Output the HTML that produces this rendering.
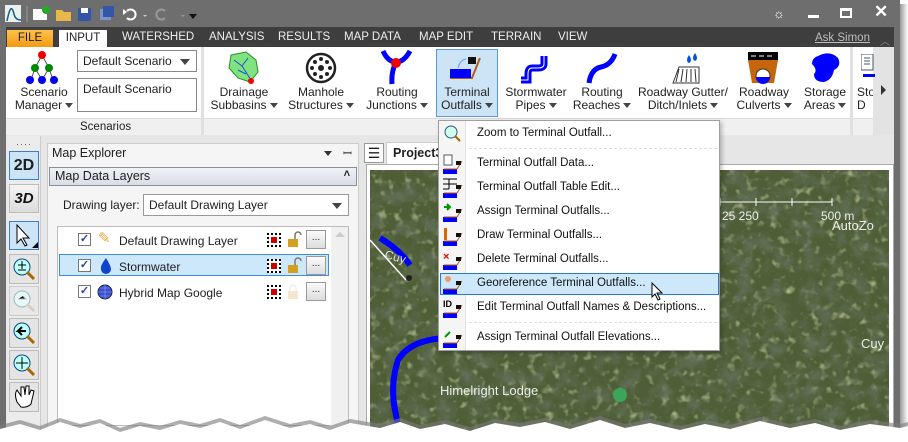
<!DOCTYPE html>
<html><head><meta charset="utf-8"><style>
*{box-sizing:border-box;margin:0;padding:0}
body{width:908px;height:442px;overflow:hidden;background:#fff;font-family:"Liberation Sans",sans-serif;font-size:12px;color:#1e1e1e;position:relative}
.a{position:absolute}
.tab{position:absolute;top:31px;color:#eee;font-size:11.5px}
.rb{position:absolute;top:86px;text-align:center;font-size:12px;line-height:13px;color:#222;white-space:nowrap}
.tri{display:inline-block;width:0;height:0;border-left:4px solid transparent;border-right:4px solid transparent;border-top:5px solid #444;vertical-align:middle;margin-left:3px}
.tb{position:absolute;left:9px;width:30px;height:29px;background:linear-gradient(#f4f4f4,#dcdcdc);border:1px solid #bcbcbc}
.mi{position:absolute;left:477px;font-size:11.5px;color:#111}
.row{position:absolute;left:59px;width:270px;height:22px}
.cb{position:absolute;left:78px;width:13px;height:13px;border:1px solid #777;background:#fff;font-size:11px;line-height:10px;text-align:center;color:#2c3fa8;font-weight:bold}
.dots{position:absolute;left:267px;width:14px;height:14px;border:2px dotted #000;background:#fff}
.dots:after{content:"";position:absolute;left:2px;top:2px;width:6px;height:6px;background:#c00}
.btn{position:absolute;left:306px;width:20px;height:19px;border:1px solid #999;background:linear-gradient(#fafafa,#ddd);font-size:10px;text-align:center;line-height:14px}
</style></head><body>
<div class="a" style="left:0;top:0;width:900px;height:442px;background:#6e6e6e"></div>
<div class="a" style="left:900px;top:4px;width:8px;height:438px;background:linear-gradient(90deg,#9a9a9a,#fff)"></div>
<svg class="a" style="left:5px;top:4px" width="200" height="20">
<rect x="0" y="1" width="16" height="17" fill="#e8f0f0"/><path d="M2 17 C5 2 7 2 9 10 C10 15 13 16 16 16" stroke="#1a5d88" stroke-width="1.5" fill="none"/>
<line x1="22" y1="2" x2="22" y2="18" stroke="#999"/>
<rect x="28" y="5" width="14" height="11" fill="#fff"/><circle cx="41" cy="6" r="4" fill="#2a2"/>
<path d="M51 6h6l2 2h7v9h-15z" fill="#e8b94a"/>
<rect x="73" y="4" width="13" height="13" fill="#3456a8"/><rect x="76" y="4" width="7" height="5" fill="#fff"/>
<rect x="95" y="5" width="11" height="11" fill="#7a93c8"/><rect x="98" y="2" width="11" height="11" fill="#3456a8"/>
<path d="M122 7 a5 5 0 1 1 0 7" stroke="#fff" stroke-width="2" fill="none"/><path d="M118 5l4 3-4 3z" fill="#fff"/>
<path d="M138 11l2 2 2-2z" fill="#ccc"/>
<path d="M160 7 a5 5 0 1 0 0 7" stroke="#999" stroke-width="2" fill="none"/>
<path d="M176 11l2 2 2-2z" fill="#999"/><path d="M184 10h8l-4 5z" fill="#111"/>
</svg>
<div class="a" style="left:773px;top:6px;color:#fff;font-size:13px">☼</div>
<div class="a" style="left:808px;top:15px;width:11px;height:3px;background:#fff"></div>
<div class="a" style="left:840px;top:8px;width:12px;height:10px;border:2px solid #fff;border-top-width:3px"></div>
<div class="a" style="left:874px;top:2px;color:#fff;font-size:17px;font-weight:bold">✕</div>
<div class="a" style="left:6px;top:27px;width:888px;height:20px;background:#3e3e3e"></div>
<div class="a" style="left:7px;top:30px;width:46px;height:17px;background:linear-gradient(#ffc24a,#f39a12);text-align:center;font-size:11.5px;line-height:17px">FILE</div>
<div class="a" style="left:59px;top:30px;width:48px;height:17px;background:#fff;text-align:center;font-size:11.5px;line-height:17px">INPUT</div>
<div class="tab" style="left:122px">WATERSHED</div><div class="tab" style="left:209px">ANALYSIS</div><div class="tab" style="left:278px">RESULTS</div><div class="tab" style="left:344px">MAP DATA</div><div class="tab" style="left:419px">MAP EDIT</div><div class="tab" style="left:491px">TERRAIN</div><div class="tab" style="left:558px">VIEW</div>
<div class="tab" style="left:815px;top:32px;color:#bbb;text-decoration:underline">Ask Simon</div>
<div class="a" style="left:880px;top:33px;color:#888;font-size:10px">︿</div>
<div class="a" style="left:6px;top:47px;width:888px;height:72px;background:#fff"></div>
<div class="a" style="left:6px;top:118px;width:888px;height:17px;background:#f0f0f0;border-top:1px solid #ddd"></div>
<div class="a" style="left:201px;top:47px;width:3px;height:88px;background:#e0e0e0"></div>
<div class="a" style="left:850px;top:47px;width:3px;height:88px;background:#e0e0e0"></div>
<div class="a" style="left:873px;top:47px;width:21px;height:88px;background:#e3e3e3"></div>
<div class="a" style="left:881px;top:85px;border-top:5px solid transparent;border-bottom:5px solid transparent;border-left:5px solid #333"></div>
<div class="a" style="left:80px;top:121px;font-size:11.5px">Scenarios</div>
<svg class="a" style="left:25px;top:50px" width="36" height="34"><path d="M17 5L10 18M17 5L24 18M10 18L6 30M10 18L17 30M24 18L28 30M24 18L17 30" stroke="#333" stroke-width="0.8"/><circle cx="17" cy="5" r="4" fill="#e00"/><circle cx="10" cy="18" r="4" fill="#080"/><circle cx="24" cy="18" r="4" fill="#080"/><circle cx="5" cy="30" r="4" fill="#00e"/><circle cx="17" cy="30" r="4" fill="#00e"/><circle cx="29" cy="30" r="4" fill="#00e"/></svg>
<div class="rb" style="left:14px;width:60px;top:86px">Scenario<br>Manager<span class="tri"></span></div>
<div class="a" style="left:77px;top:50px;width:120px;height:22px;border:1px solid #888;padding:3px 5px">Default Scenario<span class="a" style="right:6px;top:8px;border-left:5px solid transparent;border-right:5px solid transparent;border-top:6px solid #444"></span></div>
<div class="a" style="left:77px;top:78px;width:120px;height:34px;border:1px solid #888;padding:3px 5px">Default Scenario</div>
<svg class="a" style="left:226px;top:50px" width="36" height="35"><path d="M5 5 L20 2 L30 10 L32 22 L24 32 L12 28 L3 18Z" fill="#7fe47f" stroke="#2a8a2a"/><path d="M8 10 L16 16 L25 30 M16 16 L22 8 M12 20L20 24" stroke="#2050d0" fill="none"/><circle cx="25" cy="31" r="3" fill="#e00"/></svg>
<svg class="a" style="left:304px;top:52px" width="34" height="34"><circle cx="17" cy="16" r="14" fill="#fff" stroke="#222" stroke-width="2.5"/><circle cx="17" cy="16" r="3" fill="#222"/><g fill="#222"><circle cx="17" cy="7" r="2"/><circle cx="17" cy="25" r="2"/><circle cx="8" cy="16" r="2"/><circle cx="26" cy="16" r="2"/><circle cx="11" cy="10" r="2"/><circle cx="23" cy="10" r="2"/><circle cx="11" cy="22" r="2"/><circle cx="23" cy="22" r="2"/></g></svg>
<svg class="a" style="left:380px;top:50px" width="34" height="36"><path d="M3 1 Q8 12 16 12 Q24 12 30 1 M16 12 Q11 22 12 34" stroke="#00f" stroke-width="5" fill="none"/><circle cx="16" cy="13" r="5" fill="#e00"/></svg>
<div class="a" style="left:436px;top:49px;width:62px;height:68px;background:#cde4f7;border:1px solid #5b9bd5"></div>
<svg class="a" style="left:448px;top:50px" width="36" height="36"><path d="M2 28h22l8-20" stroke="#b55a12" stroke-width="2" fill="none"/><rect x="2" y="19" width="21" height="9" fill="#00f"/><rect x="20" y="7" width="8" height="7" fill="#111"/><path d="M10 18 Q12 10 18 9" stroke="#69f" fill="none"/></svg>
<div class="rb" style="left:436px;width:62px">Terminal<br>Outfalls<span class="tri"></span></div>
<svg class="a" style="left:518px;top:52px" width="36" height="34"><path d="M26 4 V12 Q26 16 20 16 H14 Q10 16 10 22 V28 H3" stroke="#00f" stroke-width="7" fill="none"/><path d="M26 4 V12 Q26 16 20 16 H14 Q10 16 10 22 V28 H3" stroke="#fff" stroke-width="1" fill="none"/></svg>
<svg class="a" style="left:585px;top:51px" width="36" height="34"><path d="M4 32 Q6 18 16 16 Q26 14 30 3" stroke="#00f" stroke-width="5" fill="none"/></svg>
<svg class="a" style="left:667px;top:51px" width="36" height="34"><path d="M6 32 L12 16 H32 V32Z" fill="#fff" stroke="#333"/><path d="M12 18 L9 31 M16 18 L14 31 M20 18L19 31 M24 18L24 31 M28 18L29 31" stroke="#333"/><path d="M22 4 q-4 6 0 8 q4 -2 0 -8z M28 2 q-4 6 0 8 q4-2 0-8z" fill="#05d"/></svg>
<svg class="a" style="left:747px;top:52px" width="34" height="34"><rect x="1" y="0" width="30" height="8" fill="#000"/><path d="M4 4h5M12 4h5M20 4h5" stroke="#fff"/><path d="M1 8 H31 L27 31 H5Z" fill="#c7650c"/><circle cx="16" cy="24" r="7" fill="#fff" stroke="#333"/><path d="M9 25 h14 a7 7 0 0 1 -14 0" fill="#00f"/></svg>
<svg class="a" style="left:808px;top:52px" width="34" height="34"><path d="M10 4 Q22 -2 30 6 Q34 14 26 18 Q24 28 16 30 Q6 30 6 22 Q10 18 4 12 Q4 6 10 4Z" fill="#00f"/></svg>
<svg class="a" style="left:861px;top:54px" width="14" height="30"><rect x="0" y="0" width="12" height="16" fill="#fff" stroke="#456"/><path d="M3 4h6M3 7h6M3 10h6" stroke="#456"/><rect x="2" y="20" width="12" height="3" fill="#00f"/></svg>
<div class="rb" style="left:205px;width:78px">Drainage<br>Subbasins<span class="tri"></span></div>
<div class="rb" style="left:286px;width:70px">Manhole<br>Structures<span class="tri"></span></div>
<div class="rb" style="left:363px;width:68px">Routing<br>Junctions<span class="tri"></span></div>
<div class="rb" style="left:501px;width:70px">Stormwater<br>Pipes<span class="tri"></span></div>
<div class="rb" style="left:570px;width:64px">Routing<br>Reaches<span class="tri"></span></div>
<div class="rb" style="left:637px;width:92px">Roadway Gutter/<br>Ditch/Inlets<span class="tri"></span></div>
<div class="rb" style="left:734px;width:60px">Roadway<br>Culverts<span class="tri"></span></div>
<div class="rb" style="left:800px;width:50px">Storage<br>Areas<span class="tri"></span></div>
<div class="rb" style="left:857px;width:16px;overflow:hidden;text-align:left">Sto<br>D</div>
<div class="a" style="left:6px;top:135px;width:888px;height:300px;background:#e6e6e6"></div>
<div class="a" style="left:7px;top:136px;width:34px;height:300px;background:#ececec;border-right:1px solid #ccc"></div>
<div class="a" style="left:16px;top:139px;color:#555;font-size:9px;letter-spacing:1px">····</div>
<div class="tb" style="top:151px;background:#cde4f7;border-color:#3a80c8;font-weight:bold;font-size:16px;text-align:center;line-height:27px">2D</div>
<div class="tb" style="top:184px;font-weight:bold;font-style:italic;font-size:15px;text-align:center;line-height:27px;color:#111">3D</div>
<div class="tb" style="top:221px;background:#cde4f7;border-color:#3a80c8"><svg width="28" height="27"><path d="M7 3 V21 L11 17 L15 24 L17 23 L13 16 H19Z" fill="#fff" stroke="#000"/><path d="M22 26 L28 20 V26Z" fill="#000"/></svg></div>
<svg class="a" style="left:9px;top:254px" width="30" height="170">
<g><rect x="0.5" y="0.5" width="29" height="29" fill="#e4e4e4" stroke="#bbb"/><circle cx="13" cy="13" r="8" fill="#bff" stroke="#147"/><path d="M18 18l7 7" stroke="#a60" stroke-width="3"/><path d="M9 11h8M13 7v8M9 16h8" stroke="#000"/></g>
<g transform="translate(0,32)"><rect x="0.5" y="0.5" width="29" height="29" fill="#e8e8e8" stroke="#ccc"/><circle cx="13" cy="13" r="8" fill="#e8f8f8" stroke="#9bb"/><path d="M18 18l7 7" stroke="#dcb" stroke-width="3"/><path d="M9 13h8l-3-3" stroke="#bbb"/></g>
<g transform="translate(0,64)"><rect x="0.5" y="0.5" width="29" height="29" fill="#e4e4e4" stroke="#bbb"/><circle cx="13" cy="13" r="8" fill="#bff" stroke="#147"/><path d="M18 18l7 7" stroke="#a60" stroke-width="3"/><path d="M17 13H9l4-4M9 13l4 4" stroke="#000" stroke-width="2" fill="none"/></g>
<g transform="translate(0,96)"><rect x="0.5" y="0.5" width="29" height="29" fill="#e4e4e4" stroke="#bbb"/><circle cx="13" cy="13" r="8" fill="#bff" stroke="#147"/><path d="M18 18l7 7" stroke="#a60" stroke-width="3"/><path d="M13 7v12M7 13h12" stroke="#000"/></g>
<g transform="translate(0,128)"><rect x="0.5" y="0.5" width="29" height="29" fill="#e4e4e4" stroke="#bbb"/><path d="M8 20 Q5 12 8 8 L12 14 L12 5 L15 5 L16 13 L17 4 L20 4 L20 13 L22 8 L25 9 L22 22 Q18 26 12 25Z" fill="#fff" stroke="#000"/></g>
</svg>
<div class="a" style="left:47px;top:143px;width:312px;height:290px;background:#f5f5f5;border:1px solid #ccc"></div>
<div class="a" style="left:52px;top:146px;font-size:12.5px">Map Explorer</div>
<div class="a" style="left:324px;top:151px;border-left:4px solid transparent;border-right:4px solid transparent;border-top:5px solid #333"></div>
<div class="a" style="left:343px;top:146px;font-size:11px">ꟷ</div>
<div class="a" style="left:49px;top:167px;width:308px;height:19px;background:linear-gradient(#f0f2f6,#d9dde6);border:1px solid #8a8f9c;padding:1px 5px;font-size:12.5px">Map Data Layers<span class="a" style="right:6px;top:0;font-size:11px;font-weight:bold">˄</span></div>
<div class="a" style="left:63px;top:198px;font-size:12px">Drawing layer:</div>
<div class="a" style="left:143px;top:194px;width:206px;height:22px;border:1px solid #999;background:#fff;padding:3px 5px">Default Drawing Layer<span class="a" style="right:6px;top:8px;border-left:5px solid transparent;border-right:5px solid transparent;border-top:6px solid #444"></span></div>
<div class="a" style="left:57px;top:226px;width:292px;height:200px;background:#fff;border:1px solid #bbb"></div>
<div class="a" style="left:331px;top:227px;width:17px;height:199px;background:#f0f0f0"></div>
<div class="a" style="left:335px;top:232px;border-left:5px solid transparent;border-right:5px solid transparent;border-bottom:5px solid #ccc"></div>
<div class="row" style="top:254px;background:#cde8fb;border:1px solid #3c8de0"></div>
<div class="cb" style="top:233px">✓</div><div class="cb" style="top:259px">✓</div><div class="cb" style="top:285px">✓</div>
<div class="a" style="left:98px;top:229px;font-size:15px;color:#e8a43a">✎</div>
<svg class="a" style="left:99px;top:257px" width="14" height="17"><path d="M7 1 Q1 9 2 12 a5 5 0 0 0 10 0 Q12 9 7 1z" fill="#1144cc"/></svg>
<svg class="a" style="left:97px;top:284px" width="16" height="16"><circle cx="8" cy="8" r="7" fill="#3a4fd8" stroke="#224"/><path d="M1 8h14M8 1v14M3 4h10M3 12h10" stroke="#9ac" stroke-width="0.6"/></svg>
<div class="a" style="left:119px;top:234px">Default Drawing Layer</div>
<div class="a" style="left:119px;top:260px">Stormwater</div>
<div class="a" style="left:119px;top:286px">Hybrid Map Google</div>
<div class="dots" style="top:233px"></div><div class="dots" style="top:259px"></div><div class="dots" style="top:285px"></div>
<svg class="a" style="left:287px;top:231px" width="16" height="16"><path d="M8 8V4a3 3 0 0 1 6 0" stroke="#777" stroke-width="1.5" fill="none"/><rect x="1" y="8" width="10" height="8" fill="#d4a020"/></svg>
<svg class="a" style="left:287px;top:257px" width="16" height="16"><path d="M8 8V4a3 3 0 0 1 6 0" stroke="#777" stroke-width="1.5" fill="none"/><rect x="1" y="8" width="10" height="8" fill="#d4a020"/></svg>
<svg class="a" style="left:287px;top:283px" width="16" height="16"><path d="M3 8V5a3 3 0 0 1 6 0v3" stroke="#eee" stroke-width="1.5" fill="none"/><rect x="1" y="8" width="10" height="8" fill="#f2e6cc"/></svg>
<div class="btn" style="top:230px">...</div><div class="btn" style="top:256px">...</div><div class="btn" style="top:282px">...</div>
<div class="a" style="left:364px;top:143px;width:20px;height:20px;background:#fff;border:1px solid #999;text-align:center;font-size:14px;line-height:18px">☰</div>
<div class="a" style="left:386px;top:142px;width:60px;height:22px;background:#fff;border:1px solid #ccc;border-bottom:none;padding:3px 6px;font-weight:bold;font-size:12.5px">Project3</div>
<div class="a" style="left:366px;top:164px;width:528px;height:272px;background:#fff;border:1px solid #aaa"></div>
<svg class="a" style="left:370px;top:170px" width="519" height="265">
<defs><filter id="n"><feTurbulence type="fractalNoise" baseFrequency="0.06" numOctaves="4" seed="5"/><feColorMatrix values="0 0 0 0 0.12  0 0 0 0 0.16  0 0 0 0 0.1  -2.2 0 0 0 1.3"/></filter>
<filter id="m"><feTurbulence type="fractalNoise" baseFrequency="0.12" numOctaves="2" seed="9"/><feColorMatrix values="0 0 0 0 0.55  0 0 0 0 0.6  0 0 0 0 0.35  0 -2.5 0 0 1.1"/></filter></defs>
<rect width="519" height="265" fill="#4f5e36"/>
<rect width="519" height="265" filter="url(#m)"/>
<rect width="519" height="265" filter="url(#n)"/>
<path d="M0 70 L36 110" stroke="#fff" stroke-width="1.5"/>
<path d="M10 68 Q30 80 40 95" stroke="#00f" stroke-width="6" fill="none"/>
<path d="M75 168 Q40 170 28 190 Q20 215 25 240 L30 265" stroke="#00f" stroke-width="6" fill="none"/>
<circle cx="39" cy="108" r="3" fill="#222"/>
<text x="14" y="88" fill="#ddd" font-size="12" font-family="Liberation Sans" transform="rotate(15 14 88)">Cuy</text>
<path d="M350 32h112M350 28v8M386 28v8M422 28v8M462 28v8" stroke="#fff"/>
<text x="352" y="50" fill="#eee" font-size="12" font-family="Liberation Sans">25  250</text>
<text x="451" y="50" fill="#eee" font-size="12" font-family="Liberation Sans">500 m</text>
<text x="462" y="60" fill="#eee" font-size="13" font-family="Liberation Sans">AutoZo</text>
<text x="491" y="178" fill="#eee" font-size="13" font-family="Liberation Sans">Cuy</text>
<text x="70" y="225" fill="#eee" font-size="13" font-family="Liberation Sans">Himelright Lodge</text>
<text x="0" y="0" fill="#ddd" font-size="12" font-family="Liberation Sans" transform="translate(258 90) rotate(80)">Cuyahoga River</text>
<circle cx="250" cy="225" r="7" fill="#3ca55c"/>
</svg>
<div class="a" style="left:440px;top:122px;width:282px;height:231px;background:rgba(0,0,0,0.25);filter:blur(2px)"></div>
<div class="a" style="left:438px;top:120px;width:282px;height:231px;background:#fff;border:1px solid #a0a0a0"></div>
<div class="a" style="left:439px;top:121px;width:27px;height:229px;background:#f5f5f5;border-right:1px solid #e2e2e2"></div>
<div class="a" style="left:469px;top:148px;width:248px;border-top:1px dashed #ddd"></div>
<div class="a" style="left:469px;top:322px;width:248px;border-top:1px dashed #ddd"></div>
<div class="a" style="left:440px;top:273px;width:279px;height:22px;background:#cde8fb;border:1px solid #2a7bd0"></div>
<div class="mi" style="top:127px">Zoom to Terminal Outfall...</div>
<div class="mi" style="top:157px">Terminal Outfall Data...</div>
<div class="mi" style="top:181px">Terminal Outfall Table Edit...</div>
<div class="mi" style="top:205px">Assign Terminal Outfalls...</div>
<div class="mi" style="top:229px">Draw Terminal Outfalls...</div>
<div class="mi" style="top:253px">Delete Terminal Outfalls...</div>
<div class="mi" style="top:277px">Georeference Terminal Outfalls...</div>
<div class="mi" style="top:301px">Edit Terminal Outfall Names &amp; Descriptions...</div>
<div class="mi" style="top:331px">Assign Terminal Outfall Elevations...</div>
<svg class="a" style="left:443px;top:124px" width="22" height="225">
<g><circle cx="8" cy="8" r="6" fill="#cfe" stroke="#357"/><path d="M12 12l5 5" stroke="#a60" stroke-width="2"/></g>
<g id="o"><rect x="0" y="45" width="14" height="5" fill="#00f"/><path d="M1 45h13l5-8" stroke="#b55a12" fill="none"/><rect x="13" y="37" width="5" height="4" fill="#111"/></g>
<rect x="1" y="31" width="8" height="10" fill="#fff" stroke="#556"/>
<use href="#o" y="24"/><path d="M0 55h14M0 60h14M6 55v10M0 65h6" stroke="#000"/>
<use href="#o" y="48"/><path d="M1 83h6M4 80l3 3-3 3" stroke="#090" stroke-width="2"/>
<use href="#o" y="72"/><rect x="1" y="104" width="3" height="12" fill="#d60"/>
<use href="#o" y="96"/><text x="0" y="136" fill="#e00" font-size="11" font-weight="bold" font-family="Liberation Sans">×</text>
<use href="#o" y="120"/><circle cx="5" cy="155" r="3" fill="#e96"/>
<use href="#o" y="144"/><text x="0" y="183" font-size="9" font-weight="bold" font-family="Liberation Sans">ID</text>
<use href="#o" y="174"/><path d="M2 213l5-5" stroke="#090" stroke-width="2"/>
</svg>
<svg class="a" style="left:651px;top:282px" width="14" height="20"><path d="M1 1 V15 L4 12 L7 18 L9 17 L6 11 H11Z" fill="#fff" stroke="#000"/></svg>
<svg class="a" style="left:0;top:410px" width="908" height="32">
<path d="M0 15 L20 10 L40 16 L60 8 L80 14 L100 9 L120 18 L140 12 L160 16 L180 10 L200 14 L220 8 L240 15 L265 6 L290 14 L310 10 L330 16 L350 9 L380 14 L400 8 L420 15 L445 10 L470 17 L495 9 L520 13 L545 8 L570 15 L600 6 L625 14 L650 9 L680 16 L705 10 L730 15 L760 7 L790 14 L815 9 L840 16 L870 10 L900 14 L908 12 V32 H0Z" fill="#7a7a7a" opacity="0.6"/>
<path d="M0 19 L20 14 L40 20 L60 12 L80 18 L100 13 L120 22 L140 16 L160 20 L180 14 L200 18 L220 12 L240 19 L265 10 L290 18 L310 14 L330 20 L350 13 L380 18 L400 12 L420 19 L445 14 L470 21 L495 13 L520 17 L545 12 L570 19 L600 10 L625 18 L650 13 L680 20 L705 14 L730 19 L760 11 L790 18 L815 13 L840 20 L870 14 L900 18 L908 16 V32 H0Z" fill="#fff"/>
</svg>
</body></html>
